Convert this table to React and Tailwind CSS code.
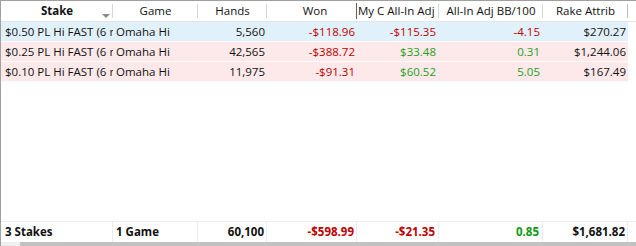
const cols = [
  { w: "w-[112px]", align: "text-left pl-[4px]" },
  { w: "w-[85px]", align: "text-left pl-[3px]" },
  { w: "w-[69px]", align: "text-right pr-[2px]" },
  { w: "w-[90px]", align: "text-right pr-[2px]" },
  { w: "w-[82px]", align: "text-right pr-[3px]" },
  { w: "w-[104px]", align: "text-right pr-[3px]" },
  { w: "w-[85px]", align: "text-right pr-[2px]" },
];

const red = "text-[#c00000]";
const green = "text-[#1ea01e]";

const rows = [
  {
    bg: "bg-[#e1f1fb]",
    cells: [
      ["$0.50 PL Hi FAST (6 max)", ""],
      ["Omaha Hi", ""],
      ["5,560", ""],
      ["-$118.96", red],
      ["-$115.35", red],
      ["-4.15", red],
      ["$270.27", ""],
    ],
  },
  {
    bg: "bg-[#fde9e9]",
    cells: [
      ["$0.25 PL Hi FAST (6 max)", ""],
      ["Omaha Hi", ""],
      ["42,565", ""],
      ["-$388.72", red],
      ["$33.48", green],
      ["0.31", green],
      ["$1,244.06", ""],
    ],
  },
  {
    bg: "bg-[#fde9e9]",
    cells: [
      ["$0.10 PL Hi FAST (6 max)", ""],
      ["Omaha Hi", ""],
      ["11,975", ""],
      ["-$91.31", red],
      ["$60.52", green],
      ["5.05", green],
      ["$167.49", ""],
    ],
  },
];

const footer = [
  ["3 Stakes", ""],
  ["1 Game", ""],
  ["60,100", ""],
  ["-$598.99", red],
  ["-$21.35", red],
  ["0.85", "text-[#109a10]"],
  ["$1,681.82", ""],
];

const HeaderCell = ({ w, children, last, bold, left }) => (
  <div className={`${w} relative h-full flex items-center ${left ? "justify-start pl-[1px]" : "justify-center"} overflow-hidden whitespace-nowrap`}>
    <span className={bold ? "font-bold" : ""}>{children}</span>
    <div className={`absolute right-0 top-[3px] bottom-[3px] w-px ${last ? "bg-[#bcbcbc]" : "bg-[#d6d6d6]"}`} />
  </div>
);

const App = () => {
  return (
    <div
      className="w-[636px] h-[246px] bg-white flex flex-col overflow-hidden text-[11.5px] text-[#111] border-l border-t border-[#a0a0a0]"
      style={{ fontFamily: '"Open Sans", "Noto Sans", sans-serif' }}
    >
      <div className="h-[21px] flex shrink-0 border-b border-[#e5e5e5] bg-white">
        <div className="w-[112px] relative h-full flex items-center justify-center">
          <span className="font-bold">Stake</span>
          <div className="absolute left-[101px] top-[13px] w-0 h-0 border-l-[4px] border-r-[4px] border-t-[4px] border-l-transparent border-r-transparent border-t-[#8a8a8a]" />
          <div className="absolute right-0 top-[3px] bottom-[3px] w-px bg-[#d6d6d6]" />
        </div>
        <HeaderCell w="w-[85px]">Game</HeaderCell>
        <HeaderCell w="w-[69px]">Hands</HeaderCell>
        <div className="w-[90px] relative h-full flex items-center justify-center overflow-hidden">
          <span className="pl-[6px]">Won</span>
          <div className="absolute right-0 top-[2px] bottom-[2px] w-px bg-[#606060]" />
        </div>
        <HeaderCell w="w-[82px]" left>My C All-In Adj</HeaderCell>
        <HeaderCell w="w-[104px]">All-In Adj BB/100</HeaderCell>
        <HeaderCell w="w-[85px]" last>Rake Attrib</HeaderCell>
      </div>

      <div className="flex flex-col">
        {rows.map((row, i) => (
          <div key={i} className={`h-[20px] flex border-b border-[#fafafa] ${row.bg} w-[627px]`}>
            {row.cells.map(([t, c], j) => (
              <div key={j} className={`${cols[j].w} ${cols[j].align} ${c} leading-[19px] whitespace-nowrap overflow-hidden`}>
                {t}
              </div>
            ))}
          </div>
        ))}
      </div>

      <div className="flex-1" />

      <div className="h-[21px] flex shrink-0 border-t border-[#ececec] font-bold">
        {footer.map(([t, c], j) => (
          <div key={j} className={`${cols[j].w} ${cols[j].align} ${c} leading-[20px] whitespace-nowrap overflow-hidden border-r border-[#ececec] ${j === 0 ? "pl-[3px]" : ""}`}>
            {t}
          </div>
        ))}
      </div>

      <div className="h-[4px] shrink-0 flex">
        <div className="w-[19px] bg-[#f0f0f0]" />
        <div className="flex-1 bg-[#c2c2c2]" />
      </div>
    </div>
  );
};

export default App;
